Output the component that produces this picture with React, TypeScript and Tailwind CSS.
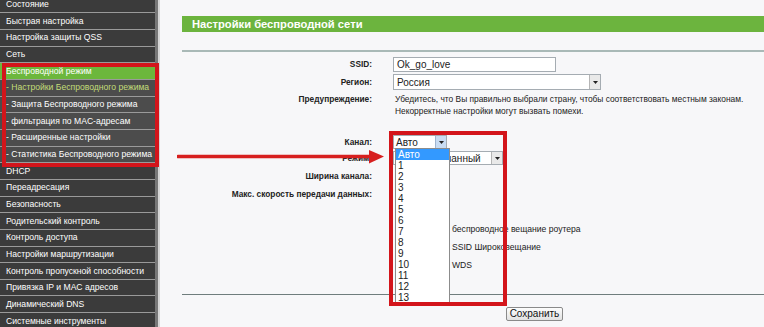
import React from 'react';

const menu: { label: string; kind?: 'active' | 'sub' | 'subActive' }[] = [
  { label: 'Состояние' },
  { label: 'Быстрая настройка' },
  { label: 'Настройка защиты QSS' },
  { label: 'Сеть' },
  { label: 'Беспроводной режим', kind: 'active' },
  { label: '- Настройки Беспроводного режима', kind: 'subActive' },
  { label: '- Защита Беспроводного режима', kind: 'sub' },
  { label: '- фильтрация по MAC-адресам', kind: 'sub' },
  { label: '- Расширенные настройки', kind: 'sub' },
  { label: '- Статистика Беспроводного режима', kind: 'sub' },
  { label: 'DHCP' },
  { label: 'Переадресация' },
  { label: 'Безопасность' },
  { label: 'Родительский контроль' },
  { label: 'Контроль доступа' },
  { label: 'Настройки маршрутизации' },
  { label: 'Контроль пропускной способности' },
  { label: 'Привязка IP и MAC адресов' },
  { label: 'Динамический DNS' },
  { label: 'Системные инструменты' },
];

const channels = ['Авто', '1', '2', '3', '4', '5', '6', '7', '8', '9', '10', '11', '12', '13'];

const Caret = ({ active }: { active?: boolean }) => (
  <div
    className={
      active
        ? 'w-[11px] h-full bg-[#c9dcf2] border-l border-[#9fb5d0] flex items-center justify-center'
        : 'w-[11px] h-full bg-[#e9e9e9] border-l border-[#b5b5b5] flex items-center justify-center'
    }
  >
    <svg width="5" height="3" viewBox="0 0 5 3">
      <polygon points="0,0 5,0 2.5,3" fill="#222" />
    </svg>
  </div>
);

const Row = ({ label, h, mt, children }: { label: string; h: string; mt: string; children?: React.ReactNode }) => (
  <div className={`flex items-center ${h} ${mt}`}>
    <div className="w-[212px] shrink-0 text-right text-[8.3px] font-bold text-[#222] whitespace-nowrap">{label}</div>
    <div className="ml-[21px] flex items-center h-full">{children}</div>
  </div>
);

export default function App() {
  return (
    <div className="w-[764px] h-[327px] overflow-hidden relative flex bg-[#f7f7f9] font-['Liberation_Sans',Arial,sans-serif]">
      {/* sidebar */}
      <div className="w-[160px] shrink-0 flex">
        <div className="w-[155px] bg-[#3b3b3b] flex flex-col">
          {menu.map((m, i) => {
            let cls = 'bg-[#3b3b3b] text-white';
            if (m.kind === 'active') cls = 'bg-[#6cb73c] text-white';
            if (m.kind === 'sub') cls = 'bg-[#4c4c4c] text-white';
            if (m.kind === 'subActive') cls = 'bg-[#4c4c4c] text-[#c2dc78]';
            return (
              <div
                key={m.label}
                className={`h-[16.67px] shrink-0 border-b border-[#9a9a9a] flex items-center px-[6px] text-[8.6px] whitespace-nowrap overflow-hidden ${cls} ${i === 0 ? '-mt-[3.33px]' : ''}`}
              >
                {m.label}
              </div>
            );
          })}
        </div>
        <div className="w-[3px] bg-[#777]" />
        <div className="w-[2px] bg-[#d6d6d6]" />
      </div>

      {/* main */}
      <div className="flex-1 relative flex flex-col text-[#222]">
        <div className="mt-[16px] ml-[22px] h-[16px] bg-[#6cb43e] flex items-center pl-[10px] text-white font-bold text-[11.2px]">
          Настройки беспроводной сети
        </div>
        <div className="mt-[18px] ml-[22px] h-[2px] bg-[#a9b9b7]" />

        <Row label="SSID:" h="h-[16px]" mt="mt-[4px]">
          <div className="w-[163px] h-[15px] bg-white border border-[#a5acb2] text-[10px] pl-[3px] flex items-center">Ok_go_love</div>
        </Row>
        <Row label="Регион:" h="h-[16px]" mt="mt-[2px]">
          <div className="w-[208px] h-[16px] bg-white border border-[#a5acb2] text-[10px] flex items-center justify-between">
            <span className="pl-[3px]">Россия</span>
            <Caret />
          </div>
        </Row>
        <div className="flex mt-[3px] h-[24px]">
          <div className="w-[212px] shrink-0 text-right text-[8.3px] font-bold leading-[12px]">Предупреждение:</div>
          <div className="ml-[23px] text-[8.4px] leading-[12px] whitespace-nowrap">
            <div>Убедитесь, что Вы правильно выбрали страну, чтобы соответствовать местным законам.</div>
            <div>Некорректные настройки могут вызвать помехи.</div>
          </div>
        </div>
        <Row label="Канал:" h="h-[14px]" mt="mt-[18px]">
          <div className="w-[54px] h-[14px] bg-white border border-[#a5acb2] text-[10px] flex items-center justify-between">
            <span className="pl-[2px]">Авто</span>
            <Caret active />
          </div>
        </Row>
        <Row label="Режим:" h="h-[14px]" mt="mt-[2px]">
          <div className="w-[110px] h-[14px] bg-white border border-[#a5acb2] text-[10px] flex items-center justify-between">
            <span className="pl-[2px]">11bgn смешанный</span>
            <Caret />
          </div>
        </Row>
        <Row label="Ширина канала:" h="h-[14px]" mt="mt-[4px]" />
        <Row label="Макс. скорость передачи данных:" h="h-[14px]" mt="mt-[4px]" />

        <div className="mt-[19px] flex flex-col pl-[292px] text-[8.6px]">
          <div className="h-[18px] flex items-center">беспроводное вещание роутера</div>
          <div className="h-[18px] flex items-center">SSID Широковещание</div>
          <div className="h-[18px] flex items-center">WDS</div>
        </div>

        <div className="mt-[20px] ml-[22px] h-[1px] bg-[#6f7d7d]" />
        <div className="mt-[5px] pl-[346px]">
          <button className="h-[14px] w-[57px] border border-[#8a8a8a] rounded-[2px] bg-gradient-to-b from-[#fdfdfd] to-[#e2e2e2] text-[10px] leading-none text-[#111]">
            Сохранить
          </button>
        </div>

        {/* channel dropdown list */}
        <div className="absolute left-[235px] top-[148px] w-[55px] h-[156px] bg-white border border-[#8c8c8c] flex flex-col text-[10px] text-[#222]">
          {channels.map((c, i) => (
            <div
              key={c}
              className={i === 0 ? 'h-[11px] leading-[11px] pl-[2px] bg-[#3399ff] text-white' : 'h-[11px] leading-[11px] pl-[2px]'}
            >
              {c}
            </div>
          ))}
        </div>

        {/* red highlight frame */}
        <div className="absolute left-[229px] top-[131px] w-[118px] h-[175px] border-[4px] border-[#d3151b]" />

        {/* red arrow */}
        <svg className="absolute left-[17px] top-[149px]" width="210" height="16" viewBox="0 0 210 16">
          <line x1="1" y1="7.5" x2="195" y2="7.5" stroke="#d71f1f" strokeWidth="3.5" strokeLinecap="round" />
          <polygon points="192,1 207,7.5 192,14.5" fill="#d71f1f" />
        </svg>
      </div>

      {/* sidebar red frame */}
      <div className="absolute left-[2px] top-[63px] w-[157px] h-[104px] border-[4px] border-[#d3151b]" />
    </div>
  );
}
